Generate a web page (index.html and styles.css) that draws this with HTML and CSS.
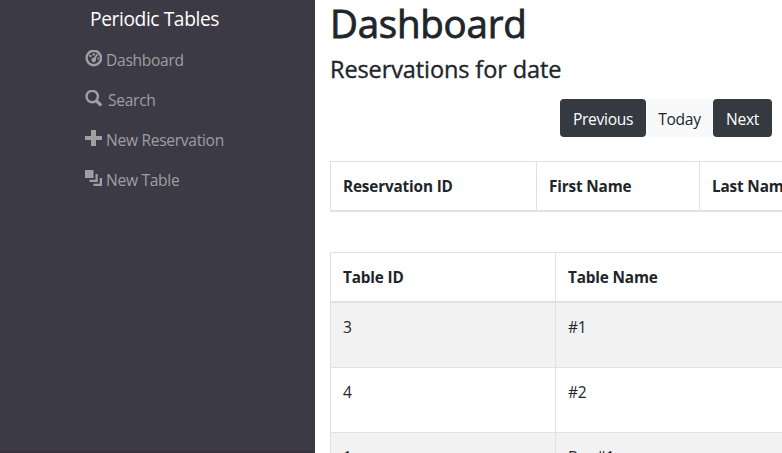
FILE: index.html
```
<!DOCTYPE html>
<html lang="en">
<head>
<meta charset="utf-8">
<title>Periodic Tables</title>
<link rel="stylesheet" href="styles.css">
</head>
<body>
<div class="app">
  <nav class="sidebar">
    <div class="brand">Periodic Tables</div>
    <ul class="menu">
      <li><svg class="icon" viewBox="0 0 17 17"><circle cx="8.800" cy="8" r="7.200" fill="none" stroke="currentColor" stroke-width="2.4"/><g fill="currentColor"><circle cx="8.700" cy="4.500" r="1.2"/><circle cx="5.400" cy="6" r="1.2"/><circle cx="13" cy="8.500" r=".9"/><path d="M12 3.600 13.300 4.800 11 7.700V10.500L9.500 12.200H7.800L6.400 10.200 6.800 8.300 9 7.500Z"/></g></svg><span class="label">Dashboard</span></li>
      <li class="search"><svg class="icon" viewBox="0 0 17 17"><circle cx="7.200" cy="6.500" r="5.700" fill="none" stroke="currentColor" stroke-width="2.400"/><path d="m11.500 11 3.800 3.500" stroke="currentColor" stroke-width="3.300" stroke-linecap="round"/></svg><span class="label">Search</span></li>
      <li class="reservation"><svg class="icon" viewBox="0 0 17 17"><path d="M6 0h5v6h6v4h-6v6H6v-6H0V6h6z" fill="currentColor"/></svg><span class="label">New Reservation</span></li>
      <li class="table-link"><svg class="icon" viewBox="0 0 17 17"><path d="M0 0h8.500v8H0zM10.500 4h2.200v8H4.500V9.700h6zM14.700 8H17v8H8.500v-2.300h6.200z" fill="currentColor"/></svg><span class="label">New Table</span></li>
    </ul>
  </nav>
  <main class="content">
    <h1>Dashboard</h1>
    <h4>Reservations for date</h4>
    <div class="actions">
      <button class="btn dark previous">Previous</button><button class="btn light">Today</button><button class="btn dark next">Next</button>
    </div>
    <table class="grid reservations">
      <colgroup><col class="id"><col class="first"><col class="last"></colgroup>
      <thead><tr><th>Reservation ID</th><th>First Name</th><th>Last Name</th></tr></thead>
    </table>
    <table class="grid tables">
      <colgroup><col class="id"><col class="name"></colgroup>
      <thead><tr><th>Table ID</th><th>Table Name</th></tr></thead>
      <tbody>
        <tr><td>3</td><td>#1</td></tr>
        <tr><td>4</td><td>#2</td></tr>
        <tr><td>1</td><td>Bar #1</td></tr>
      </tbody>
    </table>
  </main>
</div>
</body>
</html>
```
FILE: styles.css
```
* { box-sizing: border-box; }
body {
  margin: 0;
  height: 453px;
  overflow: hidden;
  background: #fff;
  color: #212529;
  font: 15.6px/24px "Segoe UI", "Open Sans", sans-serif;
  letter-spacing: -0.3px;
}
.app { display: flex; height: 453px; overflow: hidden; }
.sidebar {
  flex: 0 0 315px;
  background: #3c3a44;
  border-bottom: 2px solid #38313f;
  padding: 4px 0 0 85px;
}
.brand {
  height: 30px;
  padding-left: 5px;
  color: #fff;
  font-size: 19.2px;
  letter-spacing: -0.4px;
  line-height: 30px;
}
.menu { list-style: none; margin: 5px 0 0; padding: 0; color: #9f9ea3; }
.menu li { display: flex; height: 40px; padding-top: 8px; gap: 4px; white-space: nowrap; }
.menu .search { gap: 6px; }
.icon { width: 17px; height: 17px; margin-top: 3px; flex: none; }
.label { padding-top: 1px; }
.content { flex: 0 0 900px; padding-left: 15px; }
h1, h4 { margin: 0; font-weight: 500; white-space: nowrap; }
h1 {
  height: 55px;
  font-size: 38.5px;
  line-height: 46px;
  letter-spacing: -0.25px;
  -webkit-text-stroke: 0.8px currentColor;
}
h4 {
  height: 44px;
  font-size: 23.5px;
  line-height: 29px;
  letter-spacing: -0.1px;
  -webkit-text-stroke: 0.35px currentColor;
}
.actions { display: flex; height: 38px; margin-left: 230px; }
.btn {
  height: 38px;
  border: 0;
  border-radius: 4px;
  padding: 1px 0 0;
  font: inherit;
  letter-spacing: inherit;
}
.dark { background: #343a40; color: #fff; }
.light { width: 67px; background: #f8f9fa; color: #212529; }
.previous { width: 86px; }
.next { width: 59px; }
.grid {
  table-layout: fixed;
  border-spacing: 0;
  border-left: 1px solid #dee2e6;
}
.grid th, .grid td {
  padding: 12px;
  text-align: left;
  vertical-align: top;
  border-right: 1px solid #dee2e6;
}
.grid th {
  height: 51px;
  border-top: 1px solid #dee2e6;
  border-bottom: 2px solid #dee2e6;
  font-weight: 700;
  font-size: 15.3px;
  letter-spacing: -0.15px;
}
.grid td { height: 65px; border-bottom: 1px solid #dee2e6; }
.grid tbody tr:nth-child(odd) { background: #f2f2f2; }
.reservations { width: 533px; margin-top: 24px; }
.reservations .id { width: 206px; }
.reservations .first { width: 163px; }
.reservations .last { width: 163px; }
.tables { width: 596px; margin-top: 40px; }
.tables .id { width: 225px; }
.tables .name { width: 370px; }
```
